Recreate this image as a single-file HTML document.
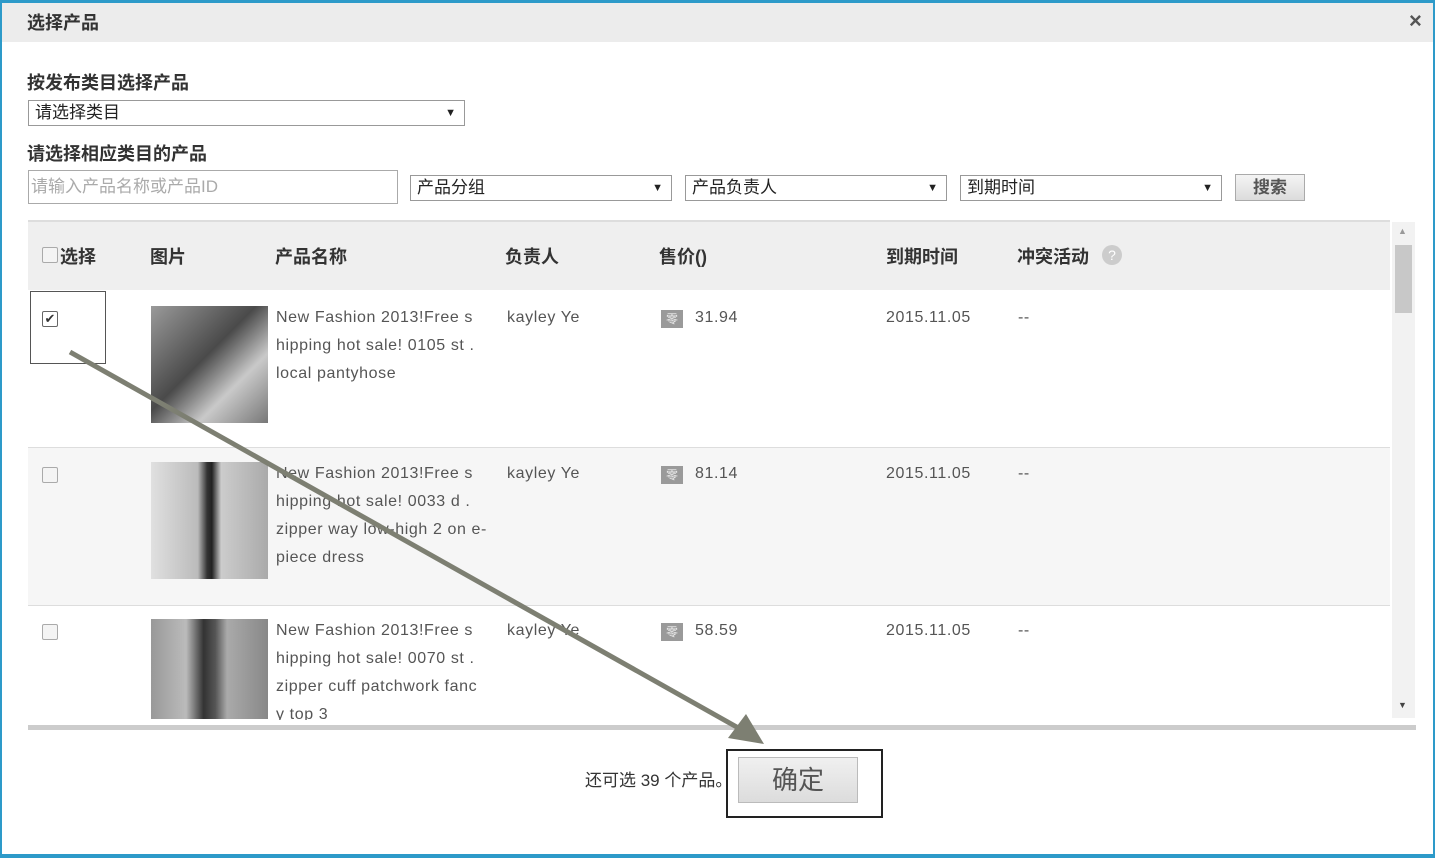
<!DOCTYPE html>
<html><head><meta charset="utf-8"><style>
body{margin:0;width:1435px;height:858px;overflow:hidden;background:#fff;font-family:"Liberation Sans","Noto Sans CJK SC",sans-serif;color:#333;position:relative}
.a{position:absolute}
.sel{position:absolute;border:1px solid #999;background:#fff;font-size:17px;box-sizing:border-box;padding-left:6px;line-height:24px;color:#222}
.sel:after{content:"▼";position:absolute;right:8px;top:0;font-size:11px}
.h{font-weight:bold;font-size:18px;color:#333}
.t{font-size:16px;color:#555;line-height:28px;letter-spacing:0.6px}
.cb{position:absolute;width:14px;height:14px;border:1px solid #aaa;background:#f4f4f4;border-radius:2px}
.img{position:absolute;width:117px;height:117px;background:linear-gradient(135deg,#9a9a9a,#4a4a4a 45%,#c9c9c9 70%,#777)}
.price{position:absolute;width:22px;height:18px;background:#9a9a9a;color:#eee;font-size:12px;text-align:center;line-height:18px}
</style></head><body>
<div class="a" style="left:0;top:0;width:1435px;height:3px;background:#2d9ac9"></div>
<div class="a" style="left:0;top:0;width:2px;height:858px;background:#2d9ac9"></div>
<div class="a" style="right:0;top:0;width:2px;height:858px;background:#2d9ac9"></div>
<div class="a" style="left:0;bottom:0;width:1435px;height:4px;background:#2d9ac9"></div>
<div class="a" style="left:2px;top:3px;width:1431px;height:39px;background:#ececec"></div>
<div class="a h" style="left:27px;top:9px">选择产品</div>
<div class="a" style="left:1409px;top:8px;font-size:22px;color:#555;font-weight:bold">×</div>
<div class="a h" style="left:27px;top:69px">按发布类目选择产品</div>
<div class="sel" style="left:28px;top:100px;width:437px;height:26px">请选择类目</div>
<div class="a h" style="left:27px;top:140px">请选择相应类目的产品</div>
<div class="a" style="left:28px;top:170px;width:370px;height:34px;border:1px solid #aaa;box-sizing:border-box;font-size:17px;color:#aaa;line-height:32px;padding-left:2px">请输入产品名称或产品ID</div>
<div class="sel" style="left:410px;top:175px;width:262px;height:26px">产品分组</div>
<div class="sel" style="left:685px;top:175px;width:262px;height:26px">产品负责人</div>
<div class="sel" style="left:960px;top:175px;width:262px;height:26px">到期时间</div>
<div class="a" style="left:1235px;top:174px;width:70px;height:27px;border:1px solid #aaa;box-sizing:border-box;background:linear-gradient(#f4f4f4,#dcdcdc);text-align:center;font-size:17px;font-weight:bold;line-height:25px;color:#555">搜索</div>
<div class="a" style="left:28px;top:220px;width:1362px;height:70px;background:#efefef;border-top:2px solid #ddd;box-sizing:border-box"></div>
<div class="cb" style="left:42px;top:247px"></div>
<div class="a h" style="left:60px;top:243px">选择</div>
<div class="a h" style="left:150px;top:243px">图片</div>
<div class="a h" style="left:275px;top:243px">产品名称</div>
<div class="a h" style="left:505px;top:243px">负责人</div>
<div class="a h" style="left:659px;top:243px">售价()</div>
<div class="a h" style="left:886px;top:243px">到期时间</div>
<div class="a h" style="left:1017px;top:243px">冲突活动</div>
<div class="a" style="left:1102px;top:245px;width:20px;height:20px;border-radius:50%;background:#ccc;color:#fff;font-size:14px;text-align:center;line-height:20px">?</div>
<div class="a" style="left:28px;top:447px;width:1362px;height:157px;background:#f6f6f6;border-top:1px solid #ddd;border-bottom:1px solid #ddd"></div>
<!-- rows -->
<div class="a" style="left:30px;top:291px;width:76px;height:73px;border:1px solid #555;box-sizing:border-box"></div>
<div class="cb" style="left:42px;top:311px;background:#fff;border-color:#666;font-size:13px;line-height:14px;text-align:center">✔</div>
<div class="img" style="left:151px;top:306px"></div>
<div class="a t" style="left:276px;top:304px;width:212px">New Fashion 2013!Free s hipping hot sale! 0105 st . local pantyhose</div>
<div class="a t" style="left:507px;top:304px">kayley Ye</div>
<div class="price" style="left:661px;top:310px">零</div>
<div class="a t" style="left:695px;top:304px">31.94</div>
<div class="a t" style="left:886px;top:304px">2015.11.05</div>
<div class="a t" style="left:1018px;top:304px">--</div>

<div class="cb" style="left:42px;top:467px"></div>
<div class="img" style="left:151px;top:462px;background:linear-gradient(90deg,#e0e0e0,#bbb 40%,#333 48%,#222 52%,#ccc 60%,#aaa)"></div>
<div class="a t" style="left:276px;top:460px;width:212px">New Fashion 2013!Free s hipping hot sale! 0033 d . zipper way low-high 2 on e-piece dress</div>
<div class="a t" style="left:507px;top:460px">kayley Ye</div>
<div class="price" style="left:661px;top:466px">零</div>
<div class="a t" style="left:695px;top:460px">81.14</div>
<div class="a t" style="left:886px;top:460px">2015.11.05</div>
<div class="a t" style="left:1018px;top:460px">--</div>

<div class="cb" style="left:42px;top:624px"></div>
<div class="img" style="left:151px;top:619px;height:100px;background:linear-gradient(90deg,#999,#bbb 30%,#333 45%,#555 55%,#aaa 65%,#888)"></div>
<div class="a" style="left:276px;top:617px;width:212px;height:103px;overflow:hidden"><div class="t">New Fashion 2013!Free s hipping hot sale! 0070 st . zipper cuff patchwork fanc y top 3</div></div>
<div class="a t" style="left:507px;top:617px">kayley Ye</div>
<div class="price" style="left:661px;top:623px">零</div>
<div class="a t" style="left:695px;top:617px">58.59</div>
<div class="a t" style="left:886px;top:617px">2015.11.05</div>
<div class="a t" style="left:1018px;top:617px">--</div>
<!-- scrollbar -->
<div class="a" style="left:1392px;top:222px;width:23px;height:496px;background:#f2f2f2"></div>
<div class="a" style="left:1395px;top:245px;width:17px;height:68px;background:#c8c8c8"></div>
<div class="a" style="left:1398px;top:226px;font-size:9px;color:#999">▲</div>
<div class="a" style="left:1398px;top:700px;font-size:9px;color:#444">▼</div>
<div class="a" style="left:28px;top:725px;width:1388px;height:5px;background:#ccc"></div>
<div class="a" style="left:585px;top:766px;font-size:17px;color:#333">还可选 39 个产品。</div>
<div class="a" style="left:726px;top:749px;width:157px;height:69px;border:2px solid #222;box-sizing:border-box;background:#fff"></div>
<div class="a" style="left:738px;top:757px;width:120px;height:46px;border:1px solid #bbb;box-sizing:border-box;background:linear-gradient(#f0f0f0,#dcdcdc);text-align:center;font-size:26px;line-height:44px;color:#555">确定</div>
<svg class="a" style="left:0;top:0" width="1435" height="858"><line x1="70" y1="352" x2="742" y2="730" stroke="#7d7f72" stroke-width="5"/><polygon points="764,744 728,738 746,714" fill="#7d7f72"/></svg>
</body></html>
